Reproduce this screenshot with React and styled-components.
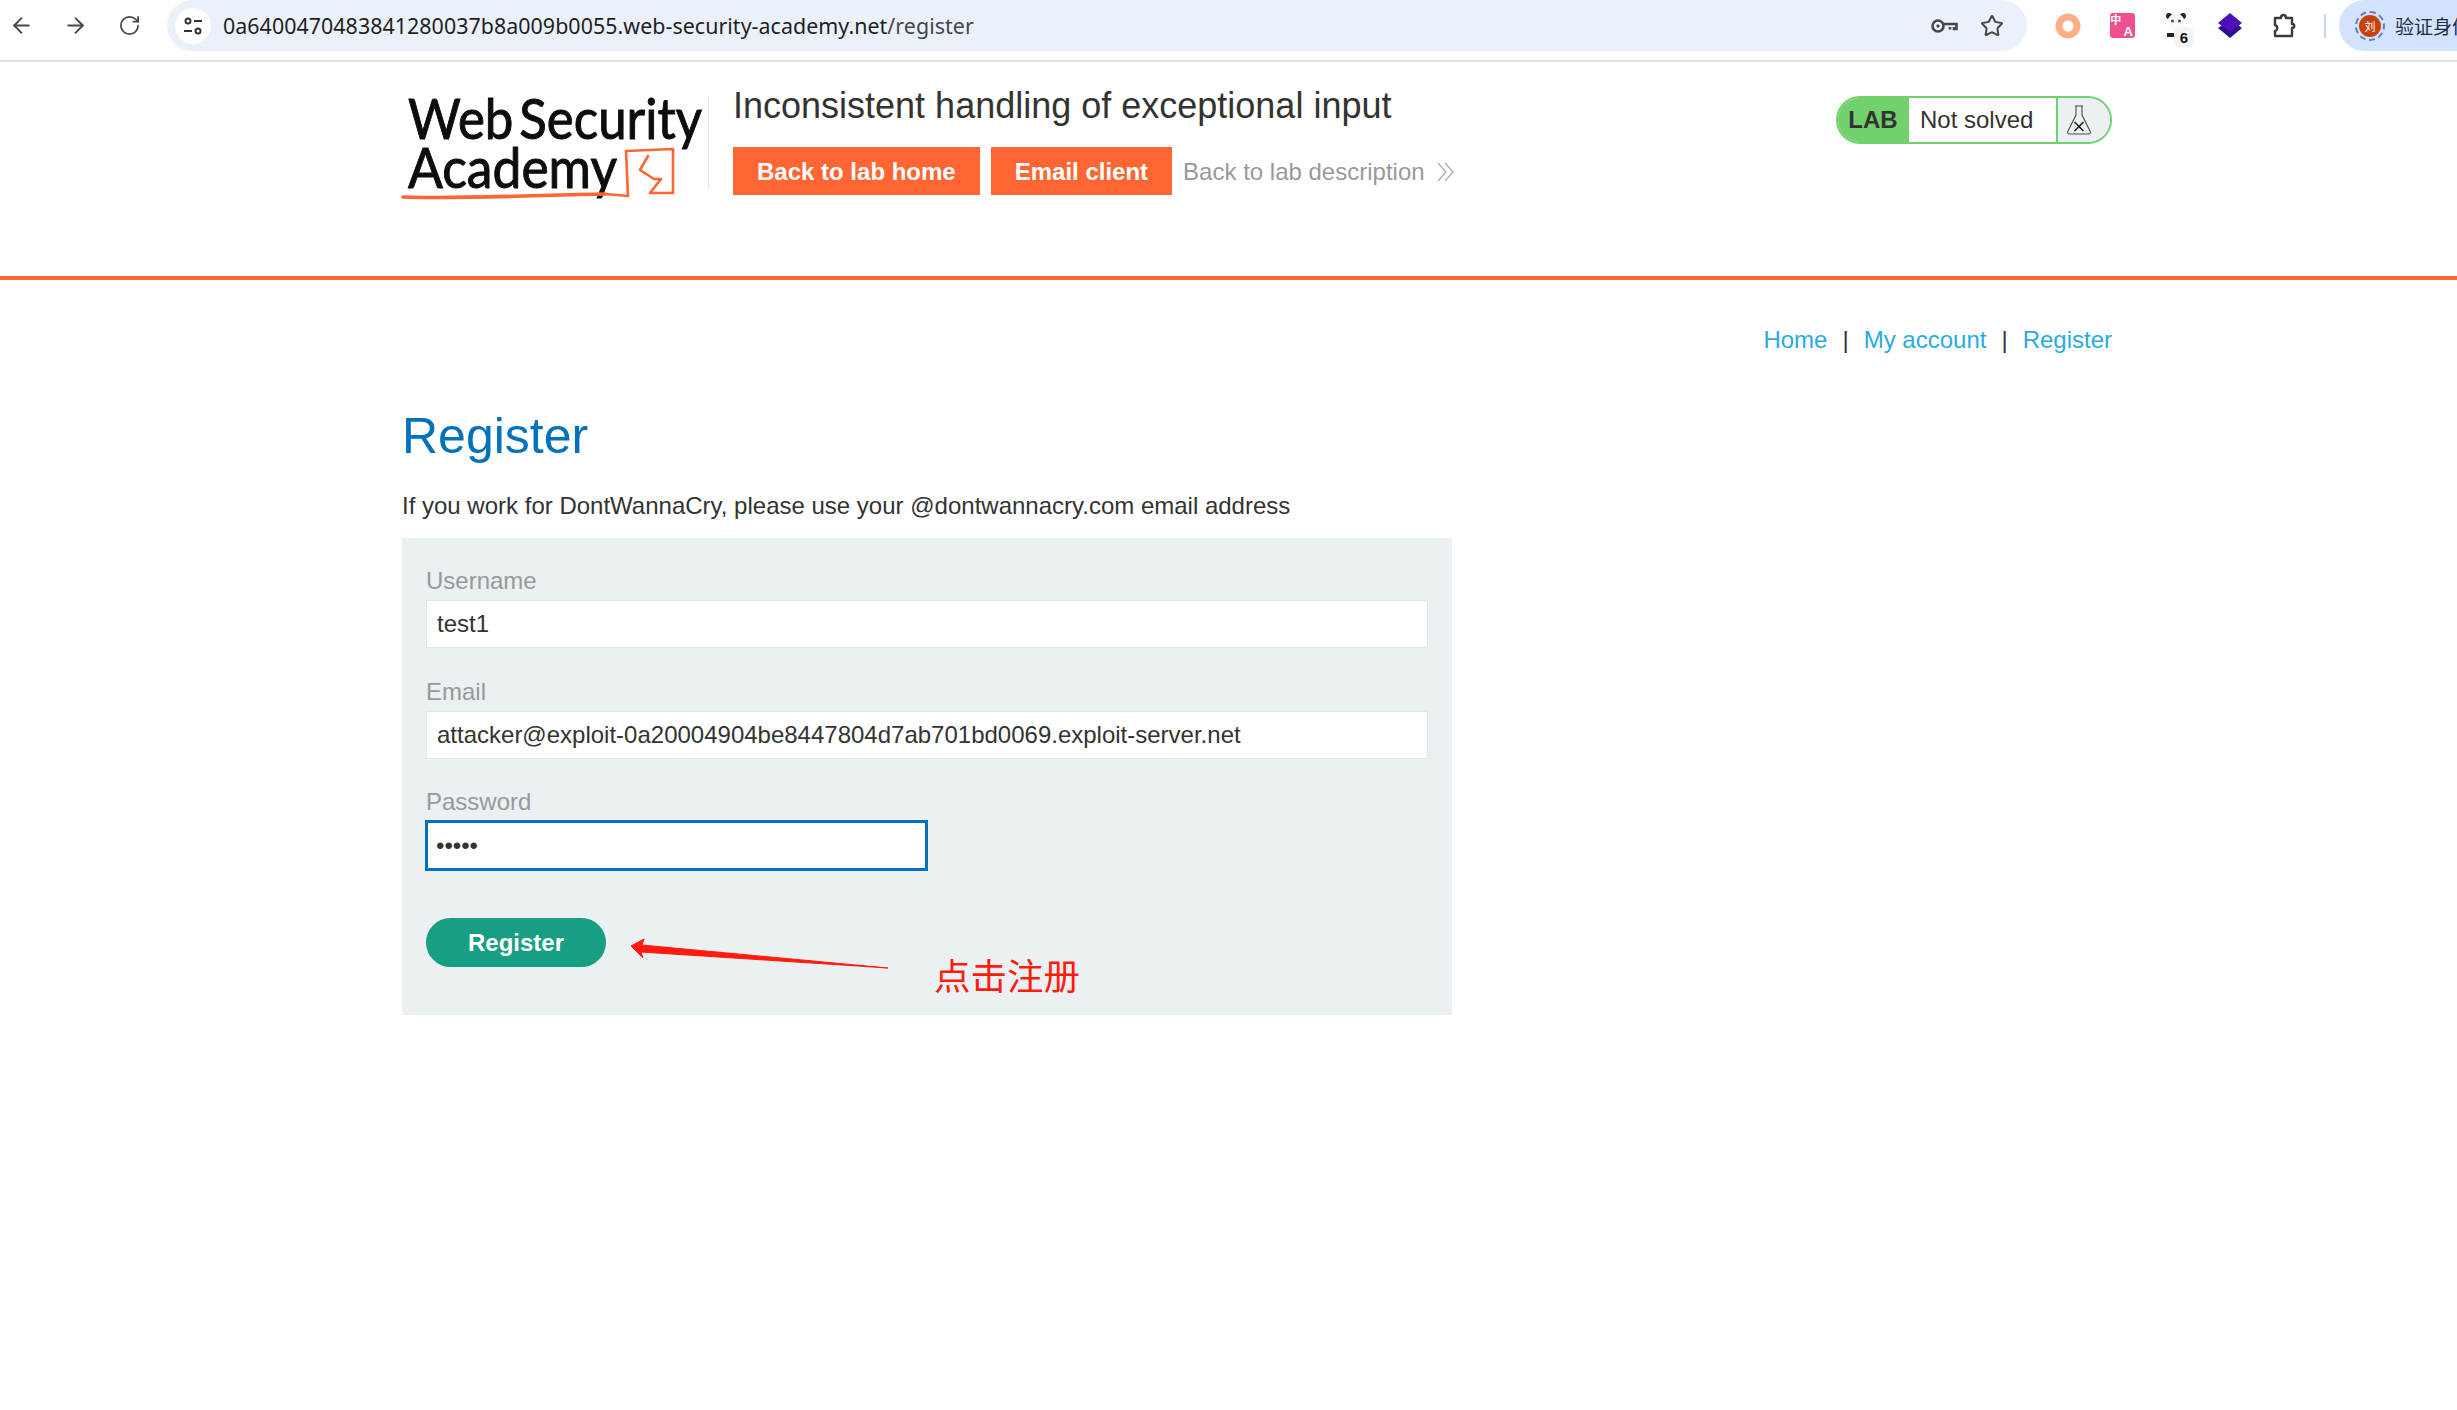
import React from 'react';
import styled, { createGlobalStyle } from 'styled-components';
import { ArrowLeft, ArrowRight, RotateCw, Star } from 'lucide-react';

const Global = createGlobalStyle`
  html, body { margin: 0; padding: 0; background: #fff; overflow: hidden; }
  body { font-family: "Liberation Sans", Arial, sans-serif; color: #333332; width: 2457px; height: 1410px; position: relative; }
  * { box-sizing: border-box; }
`;

const Toolbar = styled.div`
  height: 62px; display: flex; align-items: flex-start; padding-left: 6px;
  border-bottom: 2px solid #e3e3e3; overflow: hidden; background: #fff;
`;
const NavSlot = styled.div`
  width: 30px; height: 51px; margin-right: 24px; display: flex; align-items: center; justify-content: center; color: #474747; flex: none;
`;
const Omnibox = styled.div`
  width: 1860px; height: 51px; background: #ebf1fb; border-radius: 26px; display: flex; align-items: center;
  padding: 0 11px 0 8px; margin-left: -1px; flex: none;
`;
const SiteButton = styled.div`
  width: 36px; height: 36px; border-radius: 50%; background: #fff; display: flex; align-items: center; justify-content: center; flex: none;
`;
const Url = styled.div`
  margin-left: 12px; font: 21.4px "Noto Sans", "Liberation Sans", sans-serif; letter-spacing: 0.05px; color: #1f1f1f; flex: 1; white-space: nowrap;
  span { color: #474747; }
`;
const OmniIcon = styled.div`
  width: 48px; display: flex; justify-content: center; color: #474747; flex: none;
`;
const Extensions = styled.div`
  display: flex; margin-left: 14px; height: 51px; flex: none;
`;
const ExtSlot = styled.div`
  width: 54px; height: 51px; display: flex; align-items: center; justify-content: center; position: relative; flex: none;
`;
const Translate = styled.div`
  width: 25px; height: 25px; border-radius: 3px; background: #ef4f8e; color: #fff; font: 700 11px/11px "Noto Sans CJK SC", sans-serif;
  display: grid; grid-template-columns: 1fr 1fr; grid-template-rows: 1fr 1fr; place-items: center;
  span:last-child { grid-column: 2; grid-row: 2; font: 700 13px/12px "Liberation Sans", sans-serif; }
`;
const Badge = styled.div`
  position: absolute; left: 25px; top: 27px; width: 20px; height: 20px; border-radius: 6px; background: #f5f5f5; color: #111;
  font: 700 15px "Liberation Sans", sans-serif; display: flex; align-items: center; justify-content: center;
`;
const Divider = styled.div`
  width: 2px; height: 24px; background: #c6d8f6; margin: 14px 0 0 13px; flex: none;
`;
const Profile = styled.div`
  margin-left: 13px; width: 140px; height: 51px; background: #d3e3fd; border-radius: 26px 0 0 26px; display: flex; align-items: center;
  padding-left: 16px; flex: none; overflow: hidden;
`;
const AvatarRing = styled.div`
  width: 30px; height: 30px; border-radius: 50%; border: 2px dashed #5c7fb8; padding: 2px; flex: none;
  div { width: 22px; height: 22px; border-radius: 50%; background: #c9400f; color: #fff; font: 11px "Noto Sans CJK SC", sans-serif; display: flex; align-items: center; justify-content: center; }
`;
const ProfileName = styled.div`
  margin-left: 10px; font: 19px "Noto Sans CJK SC", sans-serif; color: #1f2d45; white-space: nowrap;
`;

const Header = styled.header`
  height: 218px; border-bottom: 4px solid #ff6633; padding: 34px 345px 0 402px; display: flex; align-items: flex-start; justify-content: space-between;
`;
const HeaderLeft = styled.div`
  display: flex; align-items: flex-start;
`;
const LogoBox = styled.div`
  width: 307px; height: 92px; border-right: 1px solid #e6e6e6; position: relative; flex: none;
`;
const LogoSvg = styled.svg`
  position: absolute; left: 0; top: -5px; overflow: visible;
`;
const Title = styled.div`
  margin-left: 24px; margin-top: -15px;
`;
const LabTitle = styled.h2`
  margin: 0; font: 400 36px/50px "Liberation Sans", sans-serif; color: #333332; white-space: nowrap;
`;
const ButtonRow = styled.div`
  display: flex; align-items: center; margin-top: 16px;
`;
const OrangeButton = styled.a`
  height: 48px; padding: 0 24px; background: #ff6633; color: #fff; font: 700 24px/50px "Liberation Sans", sans-serif; margin-right: 11px;
  white-space: nowrap;
`;
const BackLink = styled.a`
  color: #999; font-size: 24px; white-space: nowrap; display: flex; align-items: center; gap: 12px; padding-top: 1px;
`;
const Widget = styled.div`
  width: 276px; height: 48px; border: 2px solid #70d16d; border-radius: 24px; display: flex; overflow: hidden; flex: none;
`;
const LabTag = styled.div`
  width: 71px; background: #70d16d; font: 700 24px/44px "Liberation Sans", sans-serif; color: #333332; text-align: center; padding-right: 1px;
`;
const Status = styled.div`
  flex: 1; padding-left: 11px; font: 24px/43px "Liberation Sans", sans-serif; color: #333332;
`;
const FlaskCell = styled.div`
  width: 54px; background: #ebf0f2; border-left: 2px solid #70d16d; display: flex; align-items: center; justify-content: center; padding-right: 10px;
`;

const Main = styled.main`
  padding: 0 345px 0 402px;
`;
const TopLinks = styled.nav`
  display: flex; justify-content: flex-end; align-items: center; font-size: 24px; line-height: 28px; margin-top: 46px; color: #333;
`;
const TopLink = styled.a`
  color: #29abe2;
`;
const Pipe = styled.span`
  margin: 0 15px; color: #333332;
`;
const Heading = styled.h1`
  margin: 52px 0 0; font: 400 50px/60px "Liberation Sans", sans-serif; color: #0071bc;
`;
const Intro = styled.p`
  margin: 26px 0 0; font-size: 24px; line-height: 28px; color: #333332;
`;
const Form = styled.form`
  margin-top: 18px; width: 1050px; height: 477px; background: #ebf0f2; padding: 29px 24px 0; position: relative;
`;
const FieldLabel = styled.label`
  display: block; font-size: 24px; line-height: 28px; color: #999; margin-top: ${p => p.$top || 0}px;
`;
const TextInput = styled.input`
  display: block; width: ${p => p.$w}px; height: ${p => p.$h || 48}px; margin-top: ${p => p.$focus ? 4 : 5}px; margin-left: ${p => p.$focus ? -1 : 0}px;
  border: ${p => p.$focus ? '3px solid #0071bc' : '1px solid #e6e6e6'}; background: #fff; padding: 0 ${p => p.$focus ? 8 : 10}px;
  font: 24px "Liberation Sans", sans-serif; color: #333332; outline: none; border-radius: 0;
`;
const RegisterButton = styled.button`
  display: block; width: 180px; height: 49px; margin: 47px 0 0 0; border: 0; border-radius: 25px; background: #189f83; color: #fff;
  font: 700 24px "Liberation Sans", sans-serif; padding: 0;
`;
const AnnotationArrow = styled.svg`
  position: absolute; left: 220px; top: 395px; overflow: visible;
`;
const AnnotationText = styled.div`
  position: absolute; left: 532px; top: 413px; font: 36.5px/48px "Noto Sans CJK SC", sans-serif; color: #ff1c0f; white-space: nowrap;
`;

const Tune = () => (
  <svg width="22" height="22" viewBox="0 0 22 22" fill="none" stroke="#333" strokeWidth="2">
    <circle cx="6" cy="6" r="2.5" /><path d="M12 6h8M2 16h8" /><circle cx="16" cy="16" r="2.5" />
  </svg>
);
const KeyIcon = () => (
  <svg width="28" height="16" viewBox="0 0 28 16" fill="none" stroke="#474747" strokeWidth="2.6">
    <circle cx="8" cy="8" r="5.5" /><circle cx="8" cy="8" r="1.2" fill="#474747" strokeWidth="1" />
    <path d="M13.5 6H26.5V11H24V9M20 9v2.5" />
  </svg>
);
const Ring = () => (
  <svg width="26" height="26" viewBox="0 0 26 26" fill="none"><circle cx="13" cy="13" r="9" stroke="#ffae88" strokeWidth="7" /></svg>
);
const Panda = () => (
  <svg width="24" height="28" viewBox="0 0 24 28">
    <circle cx="5" cy="4" r="3" fill="#222" /><circle cx="19" cy="4" r="3" fill="#222" />
    <circle cx="12" cy="10" r="8.5" fill="#fafafa" />
    <circle cx="8.5" cy="9" r="1.6" fill="#555" /><circle cx="15.5" cy="9" r="1.6" fill="#555" />
    <rect x="3" y="21" width="10" height="4" fill="#222" />
  </svg>
);
const Layers = () => (
  <svg width="26" height="28" viewBox="0 0 26 28">
    <path d="M13 8 25 16 13 26 1 16Z" fill="#2c0f8f" /><path d="M13 1 25 11 13 20 1 11Z" fill="#4b10b8" />
  </svg>
);
const PuzzleIcon = () => (
  <svg width="26" height="26" viewBox="0 0 26 26" fill="none" stroke="#3c3c3c" strokeWidth="2.4" strokeLinejoin="round">
    <path d="M4 5h6c0-4 5-4 5 0h6v6c3 0 3 4 0 4v8H4v-5c3-1 3-5 0-6Z" />
  </svg>
);
const Flask = () => (
  <svg width="26" height="32" viewBox="0 0 26 32" fill="none" stroke="#4a4a4a">
    <path d="M9 2h8M10 2v9L2 27c-1 2 0 3 2 3h18c2 0 3-1 2-3L16 11V2" strokeWidth="1.1" />
    <path d="M8.5 18l9 9M17.5 18l-9 9" stroke="#222" strokeWidth="1.6" />
  </svg>
);
const Chevrons = () => (
  <svg width="18" height="20" viewBox="0 0 18 20" fill="none" stroke="#aaa" strokeWidth="1.2">
    <path d="M1 1l8 9-8 9M8 1l8 9-8 9" />
  </svg>
);
const Logo = () => (
  <LogoSvg width="306" height="110" viewBox="0 0 306 110">
    <g fontFamily="Lato, 'Open Sans', sans-serif" fontSize="57" fill="#0d0d0d" stroke="#0d0d0d" strokeWidth="1">
      <text x="6" y="48" wordSpacing="-8" textLength="294" lengthAdjust="spacingAndGlyphs">Web Security</text>
      <text x="6" y="97" textLength="209" lengthAdjust="spacingAndGlyphs">Academy</text>
    </g>
    <path d="M203 103L226 105L224 60L271 58L271 102H248L259 88L252 88L238 79L246 65" fill="none" stroke="#ff6633" strokeWidth="2.6" strokeLinejoin="round" strokeLinecap="round" />
    <path d="M1 106C60 108 140 104 203 103" fill="none" stroke="#ff6633" strokeWidth="3.6" strokeLinecap="round" />
  </LogoSvg>
);

export default function App() {
  return (
    <>
      <Global />
      <Toolbar>
        <NavSlot><ArrowLeft size={25} strokeWidth={1.8} /></NavSlot>
        <NavSlot><ArrowRight size={25} strokeWidth={1.8} /></NavSlot>
        <NavSlot><RotateCw size={23} strokeWidth={1.8} /></NavSlot>
        <Omnibox>
          <SiteButton><Tune /></SiteButton>
          <Url>0a6400470483841280037b8a009b0055.web-security-academy.net<span>/register</span></Url>
          <OmniIcon><KeyIcon /></OmniIcon>
          <OmniIcon><Star size={24} strokeWidth={2} /></OmniIcon>
        </Omnibox>
        <Extensions>
          <ExtSlot><Ring /></ExtSlot>
          <ExtSlot><Translate><span>中</span><span>A</span></Translate></ExtSlot>
          <ExtSlot><Panda /><Badge>6</Badge></ExtSlot>
          <ExtSlot><Layers /></ExtSlot>
          <ExtSlot><PuzzleIcon /></ExtSlot>
        </Extensions>
        <Divider />
        <Profile>
          <AvatarRing><div>刘</div></AvatarRing>
          <ProfileName>验证身份</ProfileName>
        </Profile>
      </Toolbar>
      <Header>
        <HeaderLeft>
          <LogoBox><Logo /></LogoBox>
          <Title>
            <LabTitle>Inconsistent handling of exceptional input</LabTitle>
            <ButtonRow>
              <OrangeButton>Back to lab home</OrangeButton>
              <OrangeButton>Email client</OrangeButton>
              <BackLink>Back to lab description <Chevrons /></BackLink>
            </ButtonRow>
          </Title>
        </HeaderLeft>
        <Widget>
          <LabTag>LAB</LabTag>
          <Status>Not solved</Status>
          <FlaskCell><Flask /></FlaskCell>
        </Widget>
      </Header>
      <Main>
        <TopLinks>
          <TopLink>Home</TopLink><Pipe>|</Pipe>
          <TopLink>My account</TopLink><Pipe>|</Pipe>
          <TopLink>Register</TopLink>
        </TopLinks>
        <Heading>Register</Heading>
        <Intro>If you work for DontWannaCry, please use your @dontwannacry.com email address</Intro>
        <Form>
          <FieldLabel>Username</FieldLabel>
          <TextInput $w={1002} readOnly value="test1" />
          <FieldLabel $top={30}>Email</FieldLabel>
          <TextInput $w={1002} readOnly value="attacker@exploit-0a20004904be8447804d7ab701bd0069.exploit-server.net" />
          <FieldLabel $top={29}>Password</FieldLabel>
          <TextInput $w={503} $h={51} $focus type="password" readOnly value="test1" />
          <RegisterButton type="button">Register</RegisterButton>
          <AnnotationArrow width="260" height="30" viewBox="0 0 260 30">
            <path d="M9 13L22 6L20 12L266 35L19 19L21 25Z" fill="#ff1c0f" stroke="#ff1c0f" strokeWidth="1" strokeLinejoin="round" />
          </AnnotationArrow>
          <AnnotationText>点击注册</AnnotationText>
        </Form>
      </Main>
    </>
  );
}
